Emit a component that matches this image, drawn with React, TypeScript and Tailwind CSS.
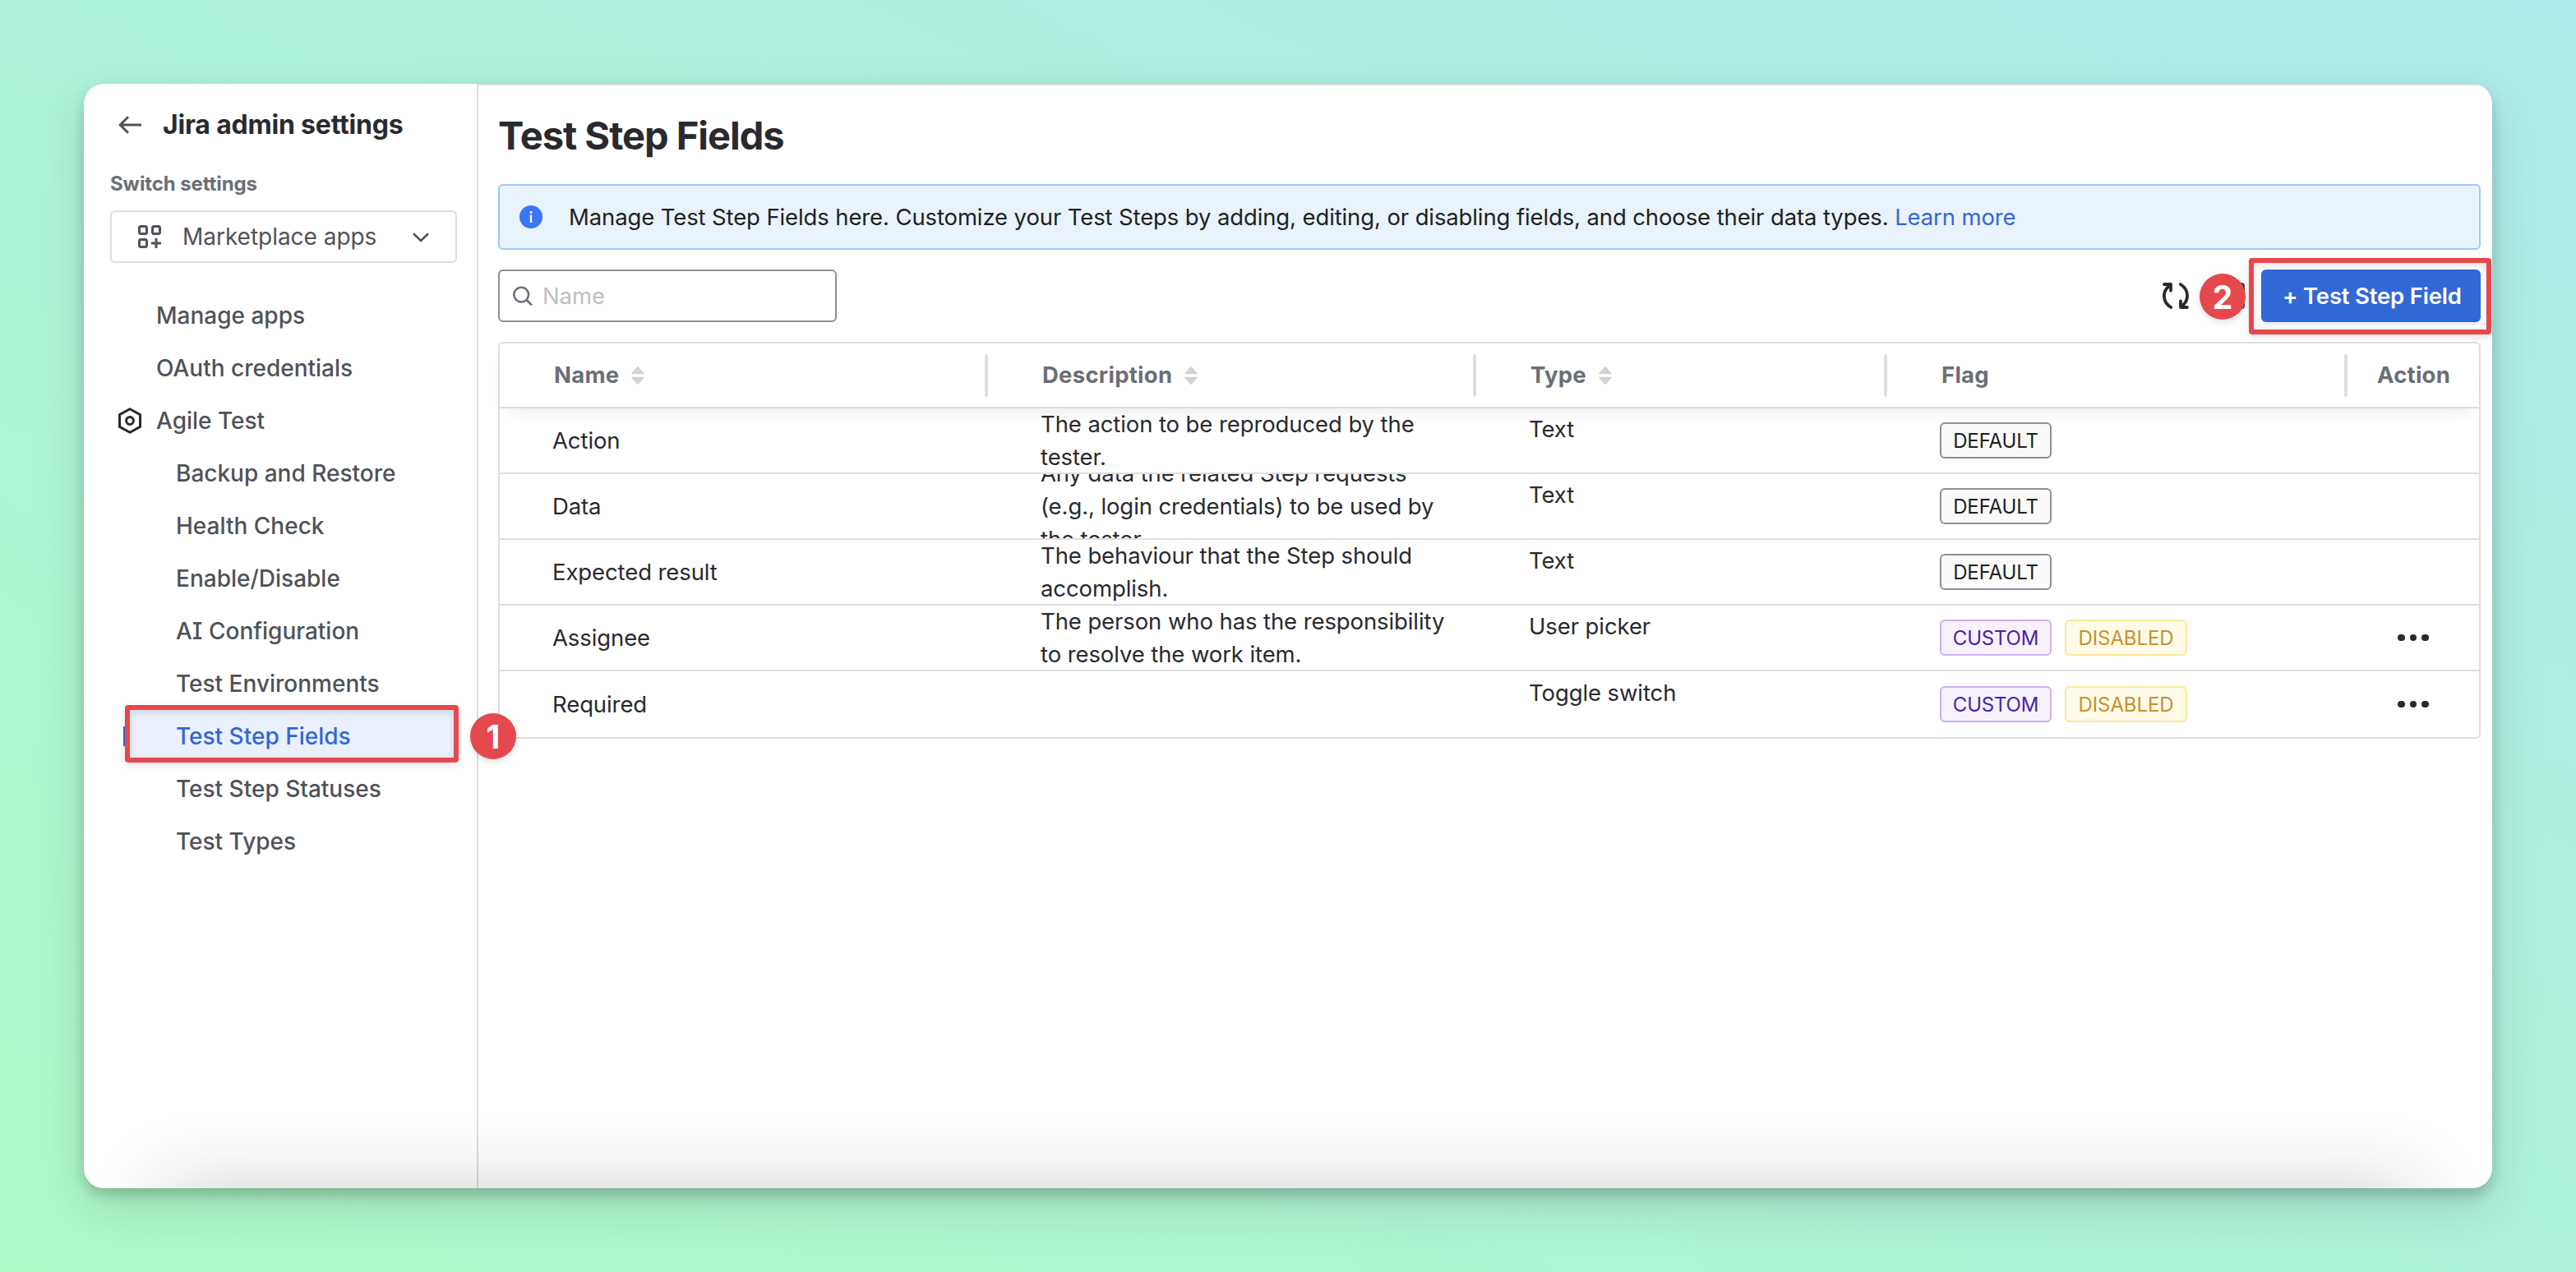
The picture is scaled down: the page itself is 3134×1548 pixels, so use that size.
import clsx from 'clsx'

type Flag = 'DEFAULT' | 'CUSTOM' | 'DISABLED'

const NAV = [
  'Backup and Restore',
  'Health Check',
  'Enable/Disable',
  'AI Configuration',
  'Test Environments',
  'Test Step Fields',
  'Test Step Statuses',
  'Test Types',
]

const ROWS: {name: string; description: string; type: string; flags: Flag[]}[] = [
  {name: 'Action', description: 'The action to be reproduced by the tester.', type: 'Text', flags: ['DEFAULT']},
  {
    name: 'Data',
    description: 'Any data the related Step requests (e.g., login credentials) to be used by the tester.',
    type: 'Text',
    flags: ['DEFAULT'],
  },
  {
    name: 'Expected result',
    description: 'The behaviour that the Step should accomplish.',
    type: 'Text',
    flags: ['DEFAULT'],
  },
  {
    name: 'Assignee',
    description: 'The person who has the responsibility to resolve the work item.',
    type: 'User picker',
    flags: ['CUSTOM', 'DISABLED'],
  },
  {name: 'Required', description: '', type: 'Toggle switch', flags: ['CUSTOM', 'DISABLED']},
]

const FLAG_STYLE: Record<Flag, string> = {
  DEFAULT: 'w-[136px] border-[#8c8f97] bg-[#fafafa] text-[#1e1f21]',
  CUSTOM: 'w-[136px] border-[#ceaff4] bg-[#f8f2fe] text-[#4d20a6] tracking-[-0.2px]',
  DISABLED: 'w-[149px] border-[#fce697] bg-[#fffbe8] text-[#c8902f]',
}

const COLS = 'grid grid-cols-[594px_594px_500px_560px_160px]'

// Moldura vermelha em volta do item destacado
function Frame({className}: {className: string}) {
  return (
    <div
      className={clsx(
        'pointer-events-none absolute rounded-[4px] border-[6px] border-[#e5484d] shadow-[0_3px_8px_rgba(0,0,0,0.12),inset_0_3px_8px_rgba(0,0,0,0.12)]',
        className,
      )}
    />
  )
}

// Número do passo, sobreposto ao conteúdo
function Step({n, className}: {n: number; className: string}) {
  return (
    <div
      className={clsx(
        'absolute z-20 flex size-14 items-center justify-center rounded-full bg-[#e5484d] text-[39px] leading-none font-bold text-white shadow-[0_3px_8px_rgba(0,0,0,0.12)]',
        className,
      )}
    >
      {n}
    </div>
  )
}

function SortIcon() {
  return (
    <svg className="h-[22px] w-4" viewBox="0 0 16 22" fill="#d1d2d4">
      <path d="M7.2.5a1 1 0 0 1 1.6 0l6.8 7.4c.5.6.2 1.3-.5 1.3H.9C.2 9.2-.1 8.5.4 7.9z" />
      <path d="M7.2 21.5a1 1 0 0 0 1.6 0l6.8-7.4c.5-.6.2-1.3-.5-1.3H.9c-.7 0-1 .7-.5 1.3z" />
    </svg>
  )
}

function Sidebar() {
  return (
    <aside className="w-[478px] shrink-0 text-[28px] font-medium text-[#505258] [font-feature-settings:'cv08']">
      <div className="mt-[26px] flex h-12 items-center pl-[42px]">
        <svg className="h-[22px] w-7" viewBox="0 0 28 22" fill="none" stroke="#505258" strokeWidth="3">
          <path d="M28 11H2M12 1.2 2.2 11l9.8 9.8" />
        </svg>
        <h1 className="ml-[26px] text-[32px] leading-none font-bold tracking-[-0.2px] text-[#292a2e]">
          Jira admin settings
        </h1>
      </div>

      <div className="mt-8 pl-8 text-[24px] leading-8 font-bold tracking-[-0.1px] text-[#6b6e76]">Switch settings</div>
      <div className="mt-4 ml-8 flex h-16 w-[422px] items-center rounded-[6px] border-2 border-[#dddedf] pl-8 font-normal">
        <svg className="size-7" viewBox="0 0 28 28" fill="none" stroke="#505258" strokeWidth="3">
          <rect x="1.5" y="1.5" width="9" height="9" rx="2" />
          <rect x="17.5" y="1.5" width="9" height="9" rx="2" />
          <rect x="1.5" y="17.5" width="9" height="9" rx="2" />
          <path d="M22 16v12M16 22h12" />
        </svg>
        <span className="ml-[26px] tracking-[-0.03px]">Marketplace apps</span>
        <svg className="mt-0.5 mr-8 ml-auto h-3 w-5" viewBox="0 0 20 12" fill="none" stroke="#505258" strokeWidth="2.6">
          <path d="M1 1.2 10 10l9-8.8" />
        </svg>
      </div>

      <nav className="mt-8 leading-[64px]">
        <div className="pl-[88px]">Manage apps</div>
        <div className="pl-[88px]">OAuth credentials</div>
        <div className="flex items-center pl-[42px]">
          <svg className="h-8 w-7" viewBox="0 0 28 32" fill="none" stroke="#292a2e" strokeWidth="3" strokeLinejoin="round">
            <path d="M14 1.8 26.5 8.6v14.8L14 30.2 1.5 23.4V8.6z" />
            <circle cx="14" cy="16" r="4.4" />
          </svg>
          <span className="ml-[18px]">Agile Test</span>
        </div>
        {NAV.map((label) =>
          label === 'Test Step Fields' ? (
            <div key={label} className="relative mr-6 ml-[50px] rounded-[4px] bg-[#eaf0fd] pl-[62px] text-[#3267d6]">
              <span className="absolute top-5 -left-0.5 h-6 w-1 bg-[#3267d6]" />
              {label}
              <Frame className="-top-1.5 -right-0.5 bottom-0 left-0" />
              <Step n={1} className="top-1 right-[-72px]" />
            </div>
          ) : (
            <div key={label} className="pl-28">
              {label}
            </div>
          ),
        )}
      </nav>
    </aside>
  )
}

function Toolbar() {
  return (
    <div className="mt-6 flex h-16 items-center">
      <div className="flex h-16 w-[412px] items-center rounded-[6px] border-2 border-[#8c8f97] pl-4">
        <svg className="size-6" viewBox="0 0 24 24" fill="none" stroke="#6b6e76" strokeWidth="2.6">
          <circle cx="10.2" cy="10.6" r="8.9" />
          <path d="m16.6 17 6.4 6.4" />
        </svg>
        <span className="mt-px ml-3 text-[#bfbfbf]">Name</span>
      </div>

      <svg
        className="ml-auto size-8"
        viewBox="0 0 32 32"
        fill="none"
        stroke="#292a2e"
        strokeWidth="3.8"
        strokeLinecap="round"
        strokeLinejoin="round"
      >
        <path d="M10.2 30C5 26.8 1.9 21.8 1.9 16c0-4.8 2.3-9.3 7-12.8M2 2h8v7.7" />
        <path d="M21.8 2c5.2 3.2 8.3 8.2 8.3 14 0 4.8-2.3 9.3-7 12.8M30 30h-8v-7.7" />
      </svg>
      <div className="relative ml-9 size-8 rounded-[4px] border-4 border-[#44464b]">
        <Step n={2} className="-top-[15px] -left-[27px]" />
      </div>
      <div className="relative ml-5">
        <button className="block h-16 w-[267px] rounded-[6px] bg-[#3267d6] pt-px pl-[26px] text-left font-semibold tracking-[-0.2px] text-white shadow-[0_4px_0_#eaf3fe]">
          + Test Step Field
        </button>
        <Frame className="-top-3.5 -right-[13px] -bottom-[15px] -left-[15px]" />
      </div>
    </div>
  )
}

function HeadCell({label, sortable, last}: {label: string; sortable?: boolean; last?: boolean}) {
  return (
    <div className={clsx('flex items-center', last ? 'pl-[36px]' : 'pl-[66px]')}>
      <span>{label}</span>
      {sortable && (
        <span className="ml-[15px]">
          <SortIcon />
        </span>
      )}
      {!last && <span className="ml-auto h-[52px] w-1 rounded-full bg-[#dddedf]" />}
    </div>
  )
}

function FieldsTable() {
  return (
    <div className="mt-6 rounded-[6px] border-2 border-[#dddedf]">
      <div
        className={clsx(
          COLS,
          'h-[79px] border-b-2 border-[#dddedf] font-bold tracking-[0.25px] text-[#6b6e76] shadow-[0_10px_20px_-10px_rgba(0,0,0,0.12)]',
        )}
      >
        <HeadCell label="Name" sortable />
        <HeadCell label="Description" sortable />
        <HeadCell label="Type" sortable />
        <HeadCell label="Flag" />
        <HeadCell label="Action" last />
      </div>
      {ROWS.map((row) => (
        <div key={row.name} className={clsx(COLS, 'h-20 border-[#dddedf] not-last:border-b-2')}>
          <div className="flex items-center pt-px pl-16">{row.name}</div>
          <div className="flex min-h-0 items-center overflow-hidden pl-16">
            <p className="w-[510px] leading-10">{row.description}</p>
          </div>
          <div className="flex items-center pb-[26px] pl-16">{row.type}</div>
          <div className="flex items-center gap-4 pl-16">
            {row.flags.map((flag) => (
              <span
                key={flag}
                className={clsx(
                  'flex h-11 items-center justify-center rounded-[6px] border-2 pt-px text-[24px] tracking-[-0.1px]',
                  FLAG_STYLE[flag],
                )}
              >
                {flag}
              </span>
            ))}
          </div>
          <div className="flex items-center gap-[6px] pl-[61px]">
            {row.flags.includes('CUSTOM') &&
              [0, 1, 2].map((i) => <span key={i} className="size-[8.5px] rounded-full bg-[#292a2e]" />)}
          </div>
        </div>
      ))}
    </div>
  )
}

export default function App() {
  return (
    <div className="h-[1548px] w-[3134px] overflow-hidden bg-linear-[to_top_right,#aefbca,#aeeceb] p-[102px] font-['Inter',sans-serif]">
      <div className="relative flex h-[1344px] w-[2930px] overflow-clip rounded-[24px] bg-white shadow-[0_8px_16px_rgba(0,0,0,0.18),0_24px_60px_rgba(0,0,0,0.14)]">
        <Sidebar />
        <main className="w-[2452px] border-t-2 border-l-2 border-[#dddedf] pr-3.5 pl-6 text-[27.5px] tracking-[-0.1px] text-[#292a2e]">
          <h2 className="mt-[30px] text-[47px] leading-[62px] font-bold tracking-[-1px]">Test Step Fields</h2>
          <div className="mt-7 flex h-20 items-center rounded-[6px] border-2 border-[#9bc8fb] bg-[#e9f3fe] pl-6 text-[#1e1f21]">
            <svg className="size-7" viewBox="0 0 28 28">
              <circle cx="14" cy="14" r="14" fill="#3b76f8" />
              <circle cx="14" cy="8.3" r="1.5" fill="#fff" />
              <path d="M14 11.5v9.5" stroke="#fff" strokeWidth="2.2" />
            </svg>
            <p className="mt-px ml-8 tracking-[-0.12px]">
              Manage Test Step Fields here. Customize your Test Steps by adding, editing, or disabling fields, and choose
              their data types. <span className="text-[#3267d6]">Learn more</span>
            </p>
          </div>
          <Toolbar />
          <FieldsTable />
        </main>

        {/* sombra suave na base da janela */}
        <div className="pointer-events-none absolute top-full right-24 left-24 h-24 shadow-[0_0_96px_rgba(0,0,0,0.2)]" />
      </div>
    </div>
  )
}
